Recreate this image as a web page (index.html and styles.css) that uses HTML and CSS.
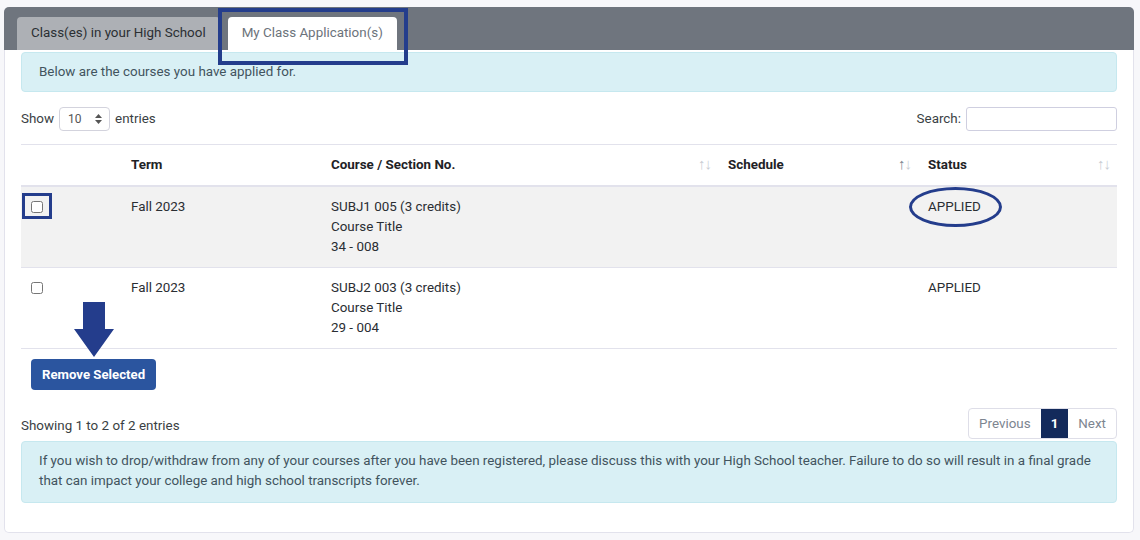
FILE: index.html
```html
<!DOCTYPE html>
<html lang="en">
<head>
  <meta charset="UTF-8">
  <title>My Class Application(s)</title>
  <link rel="stylesheet" href="styles.css">
</head>
<body>

  <div class="card">
    <div class="tab-bar">
      <div class="tab">Class(es) in your High School</div>
      <div class="tab active">My Class Application(s)</div>
    </div>

    <div class="card-body">
      <div class="alert alert-top">Below are the courses you have applied for.</div>

      <div class="controls">
        <label class="length">Show
          <span class="fake-select">10
            <svg width="7" height="10" viewBox="0 0 7 10"><path d="M3.5 0 L7 4 H0 Z M0 6 H7 L3.5 10 Z" fill="#555"/></svg>
          </span>
          entries
        </label>
        <label class="search">Search: <input type="text"></label>
      </div>

      <table class="apps">
        <thead>
          <tr>
            <th class="col-check"></th>
            <th class="col-term">Term</th>
            <th class="col-course sortable">Course / Section No.<span class="sort">&#8593;&#8595;</span></th>
            <th class="col-sched sortable">Schedule<span class="sort"><b>&#8593;</b>&#8595;</span></th>
            <th class="col-status sortable">Status<span class="sort">&#8593;&#8595;</span></th>
          </tr>
        </thead>
        <tbody>
          <tr class="odd">
            <td><input type="checkbox"></td>
            <td>Fall 2023</td>
            <td>SUBJ1 005 (3 credits)<br>Course Title<br>34 - 008</td>
            <td></td>
            <td>APPLIED</td>
          </tr>
          <tr>
            <td><input type="checkbox"></td>
            <td>Fall 2023</td>
            <td>SUBJ2 003 (3 credits)<br>Course Title<br>29 - 004</td>
            <td></td>
            <td>APPLIED</td>
          </tr>
        </tbody>
      </table>

      <button class="btn-remove">Remove Selected</button>

      <div class="info-row">
        <span class="info">Showing 1 to 2 of 2 entries</span>
        <div class="pager">
          <span class="page disabled">Previous</span>
          <span class="page current">1</span>
          <span class="page disabled">Next</span>
        </div>
      </div>

      <div class="alert alert-bottom">
        If you wish to drop/withdraw from any of your courses after you have been registered, please discuss this with your High School teacher. Failure to do so will result in a final grade that can impact your college and high school transcripts forever.
      </div>
    </div>

    <!-- annotation marks drawn over the screenshot -->
    <div class="mark mark-tab"></div>
    <div class="mark mark-check"></div>
    <div class="mark mark-status"></div>
    <svg class="mark-arrow" width="42" height="56" viewBox="0 0 42 56">
      <path d="M10 0 H32 V27 H41 L21 55 L1 27 H10 Z" fill="#243d8c"/>
    </svg>
  </div>

</body>
</html>
```

FILE: styles.css
```css
body {
  margin: 0;
  padding: 7px 6px 0 4px;
  background: #f7f7fa;
  font-family: Roboto, "Liberation Sans", Arial, sans-serif;
  font-size: 13.4px;
  line-height: 20px;
  color: #212529;
}

.card {
  position: relative;
  background: #fff;
  border: 1px solid #e2e2ec;
  border-top: none;
  border-radius: 5px;
  height: 526px;
  box-sizing: border-box;
}

.tab-bar {
  display: flex;
  gap: 8px;
  background: #6f757e;
  border-radius: 5px 5px 0 0;
  padding: 10px 0 0 13px;
  height: 43px;
  box-sizing: border-box;
  margin: 0 -1px;
}
.tab {
  background: #adb0b5;
  color: #2b2f33;
  padding: 6px 14px 7px 14px;
  border-radius: 4px 4px 0 0;
  line-height: 20px;
}
.tab.active { background: #fff; color: #6c737b; }

.card-body { padding: 2px 16px 0 16px; }

.alert {
  background: #d9f0f5;
  border: 1px solid #c6e8ef;
  border-radius: 4px;
  color: #42545e;
  padding: 9px 17px;
}
.alert-bottom { padding: 9px 17px 11px 17px; }

.controls {
  display: flex;
  justify-content: space-between;
  align-items: center;
  margin-top: 15px;
  height: 24px;
}
.length, .search { display: flex; align-items: center; gap: 5px; color: #3a3f44; }
.fake-select {
  display: inline-flex;
  justify-content: space-between;
  align-items: center;
  width: 51px;
  height: 24px;
  box-sizing: border-box;
  border: 1px solid #d3d3dd;
  border-radius: 4px;
  padding: 0 7px 0 8px;
  color: #555;
  font-size: 12px;
}
.search input {
  width: 151px;
  height: 24px;
  box-sizing: border-box;
  border: 1px solid #cfcfe0;
  border-radius: 3px;
  margin: 0;
}

.apps {
  width: 100%;
  border-collapse: collapse;
  margin-top: 13px;
  table-layout: fixed;
}
.apps th {
  text-align: left;
  font-weight: bold;
  padding: 10px 10px;
  border-top: 1px solid #e2e2ec;
  border-bottom: 2px solid #e2e2ec;
  color: #1e2226;
}
.col-check { width: 80px; }
.col-term { width: 180px; }
.col-course { width: 377px; }
.col-sched { width: 180px; }
.sortable { position: relative; }
.sort {
  position: absolute;
  right: 7px;
  top: 9px;
  color: #c9cdd3;
  font-weight: normal;
  font-size: 15px;
  letter-spacing: -1px;
}
.sort b { color: #7d8590; font-weight: normal; }
.apps td {
  vertical-align: top;
  padding: 10px 10px;
  border-bottom: 1px solid #e2e2ec;
  color: #2a2e33;
  height: 60px;
}
.apps tr.odd td { background: #f2f2f2; }
.apps input[type=checkbox] { margin: 4px 0 0 0; width: 12px; height: 12px; }

.btn-remove {
  margin: 10px 0 0 10px;
  background: #2b559f;
  color: #fff;
  border: none;
  border-radius: 4px;
  font-family: inherit;
  font-size: 13.2px;
  font-weight: bold;
  padding: 0 11px;
  height: 31px;
}

.info-row {
  display: flex;
  justify-content: space-between;
  align-items: flex-end;
  margin-top: 18px;
  margin-bottom: 2px;
}
.info { color: #3a3f44; padding-bottom: 3px; }
.pager {
  display: flex;
  border: 1px solid #dedee8;
  border-radius: 4px;
  overflow: hidden;
  height: 31px;
  box-sizing: border-box;
}
.page { padding: 5px 10px 4px 10px; color: #7d8590; }
.page.current { background: #132a5b; color: #fff; font-weight: bold; }

.mark {
  position: absolute;
  border: 4px solid #243d8c;
  box-sizing: border-box;
}
.mark-tab { left: 213px; top: 1px; width: 190px; height: 57px; }
.mark-check { left: 17px; top: 186px; width: 30px; height: 26px; border-width: 3px; }
.mark-status {
  left: 904px; top: 180px; width: 93px; height: 40px;
  border-width: 3px; border-radius: 50%;
}
.mark-arrow { position: absolute; left: 68px; top: 295px; }
```
